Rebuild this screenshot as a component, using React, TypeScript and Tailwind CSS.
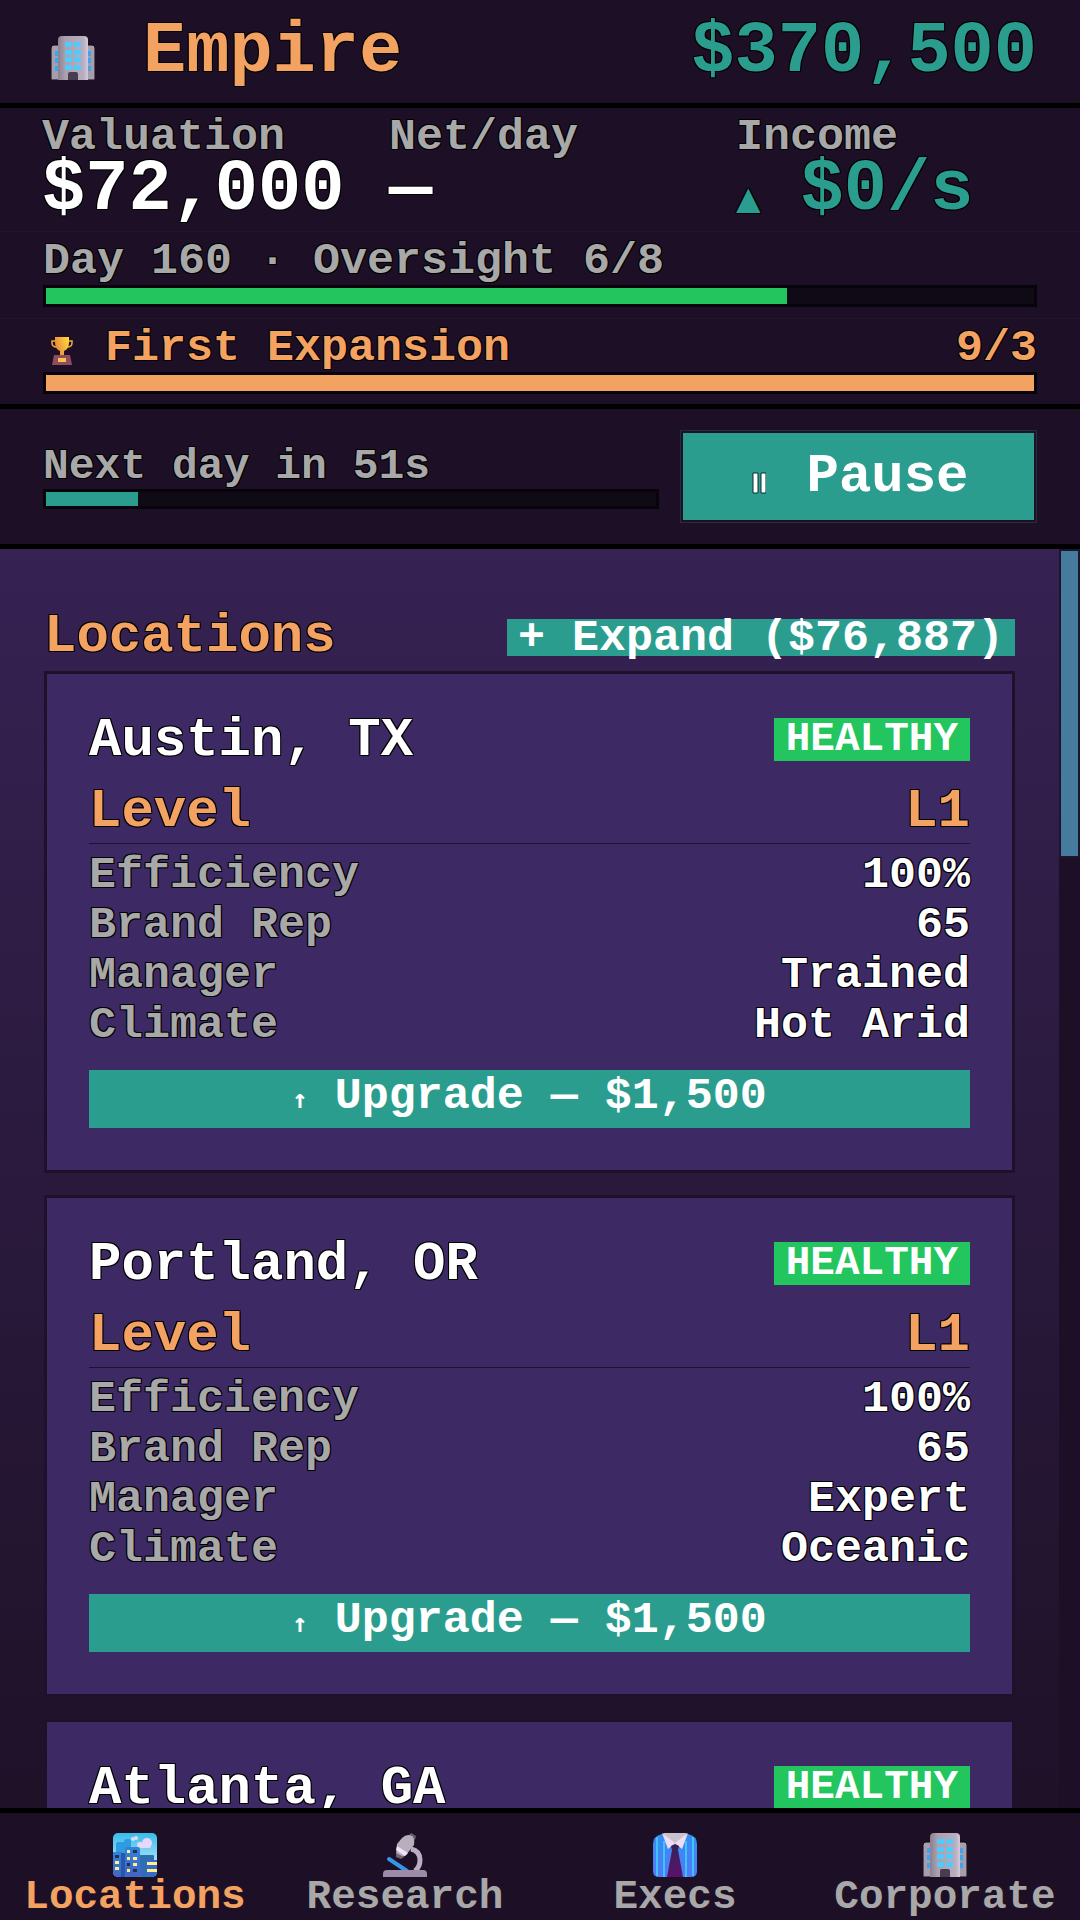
import type { ReactNode } from 'react';

interface IconProps {
    className?: string;
}

function OfficeIcon({ className }: IconProps) {
    return (
        <svg viewBox="0 0 44 44" className={className} aria-hidden="true">
            <defs>
                <linearGradient id="officeWall" x1="0" x2="1" y1="0" y2="0">
                    <stop offset="0" stopColor="#8a808f" />
                    <stop offset="0.25" stopColor="#aaa0ae" />
                    <stop offset="0.85" stopColor="#b9adc0" />
                    <stop offset="1" stopColor="#d4cbd9" />
                </linearGradient>
            </defs>
            <path d="M0 44V12q0-3 3-3h5v35zM44 44V12q0-3-3-3h-5v35z" fill="#a79dab" stroke="#0b0610" />
            <path d="M7 44V4q0-4 4-4h22q4 0 4 4v40z" fill="url(#officeWall)" />
            {[6, 14, 21, 29].map(y => (
                <g key={y} fill="#50cbfb">
                    <rect x="14" y={y} width="7" height="5" rx="1" />
                    <rect x="23" y={y} width="7" height="5" rx="1" />
                </g>
            ))}
            {[15, 22, 30].map(y => (
                <g key={y} fill="#35a8f4">
                    <rect x="4" y={y} width="3" height="5" />
                    <rect x="37" y={y} width="3" height="5" />
                </g>
            ))}
            <path d="M17 44v-6q0-2 2-2h6q2 0 2 2v6z" fill="#463d51" />
        </svg>
    );
}

function TrophyIcon({ className }: IconProps) {
    return (
        <svg viewBox="0 0 22 28" className={className} aria-hidden="true">
            <defs>
                <linearGradient id="cup" x1="0" x2="1" y1="0.6" y2="0.2">
                    <stop offset="0" stopColor="#e8853a" />
                    <stop offset="1" stopColor="#ffd83d" />
                </linearGradient>
            </defs>
            <path d="M5 4H1v2q0 4 5 4M17 4h4v2q0 4-5 4" fill="none" stroke="#f3a93c" strokeWidth="1.5" />
            <path d="M4 0h14v5q0 7-5 9v4H9v-4q-5-2-5-9z" fill="url(#cup)" />
            <path d="M3 18h16l2 10H1z" fill="#8e4c5c" />
            <rect x="7" y="21" width="8" height="4" fill="#fbc14e" />
        </svg>
    );
}

function CityIcon({ className }: IconProps) {
    return (
        <svg viewBox="0 0 44 44" className={className} aria-hidden="true">
            <defs>
                <linearGradient id="sky" x1="0" x2="0" y1="0" y2="1">
                    <stop offset="0" stopColor="#37bdea" />
                    <stop offset="0.6" stopColor="#9fdff8" />
                </linearGradient>
                <linearGradient id="tower" x1="0" x2="0" y1="0" y2="1">
                    <stop offset="0" stopColor="#2f84dc" />
                    <stop offset="1" stopColor="#4663c4" />
                </linearGradient>
                <clipPath id="cityFrame">
                    <rect width="44" height="44" rx="5" />
                </clipPath>
            </defs>
            <g clipPath="url(#cityFrame)">
                <rect width="44" height="44" fill="url(#sky)" />
                <path d="M3 44V11q0-2 2-2h6V8q0-2 2-2h3q2 0 2 2v36z" fill="#2f9be2" />
                <rect x="26" y="22" width="15" height="22" rx="1" fill="#2a6fae" />
                <g fill="#e6d8fa">
                    <circle cx="34" cy="10" r="5" />
                    <circle cx="27" cy="12" r="3" />
                    <circle cx="23" cy="5" r="2" />
                    <circle cx="20" cy="6" r="2" />
                    <rect x="25" y="11" width="13" height="4" rx="2" />
                </g>
                <rect x="0" y="19" width="9" height="25" fill="url(#tower)" />
                <rect x="8" y="20" width="4" height="24" fill="#2656ad" />
                <rect x="12" y="14" width="15" height="30" rx="2" fill="url(#tower)" />
                <path d="M27 34l3-2v12h-3zM33 27h11v17H33z" fill="#3769c8" />
                <g fill="#fff089">
                    <path d="M14 17h3v3h-3zM14 24h3v3h-3zM14 36h3v3h-3zM20 24h4v3h-4zM20 30h4v3h-4z" />
                    <path d="M2 28h4v3H2zM2 34h4v3H2zM34 29h10v3H34zM34 36h10v3H34z" />
                </g>
                <path d="M20 17h4v3h-4zM14 30h3v3h-3zM20 36h4v3h-4zM2 22h4v3H2z" fill="#25304f" />
            </g>
        </svg>
    );
}

function MicroscopeIcon({ className }: IconProps) {
    return (
        <svg viewBox="0 0 44 44" className={className} aria-hidden="true">
            <path d="M28 16q9 2 9 11 0 7-5 11" fill="none" stroke="#b9aec2" strokeWidth="5" />
            <path d="M6 26l18 12" stroke="#3795e8" strokeWidth="4" strokeLinecap="round" />
            <path d="M0 44v-3q0-4 4-4h36q4 0 4 4v3z" fill="#9b8ba8" />
            <path d="M26 2l2-2 5 3-1 4z" fill="#665f6b" />
            <path d="M19 5q5-5 10-2 3 2 2 9l-8 10q-4 4-10 0l1-11z" fill="#b7afbb" />
            <path d="M14 13l11 7-3 3-9-6z" fill="#f0e2fa" />
            <path d="M13 20l8 4-3 2-5-2z" fill="#6d6474" />
        </svg>
    );
}

function ShirtIcon({ className }: IconProps) {
    return (
        <svg viewBox="0 0 44 44" className={className} aria-hidden="true">
            <defs>
                <linearGradient id="shirt" x1="0" x2="0" y1="0" y2="1">
                    <stop offset="0" stopColor="#358ff3" />
                    <stop offset="1" stopColor="#5379f6" />
                </linearGradient>
                <linearGradient id="tie" x1="0" x2="0" y1="0" y2="1">
                    <stop offset="0" stopColor="#342457" />
                    <stop offset="1" stopColor="#5b116c" />
                </linearGradient>
            </defs>
            <path d="M9 1q-9 2-9 10v27q0 6 6 6h32q6 0 6-6V11q0-8-9-10z" fill="url(#shirt)" />
            <path d="M4 4v39M11 8v36M33 8v36M40 4v39" stroke="#3ec3fa" strokeWidth="2" />
            <path d="M10 0h24l-8 12h-8z" fill="#c8c2cc" />
            <path d="M9 0l13 10-7 6zM35 0L22 10l7 6z" fill="#f0ddf5" />
            <path d="M18 13l4-2 4 2-1 4 5 27H14l5-27z" fill="url(#tie)" />
        </svg>
    );
}

const STATS = [
    { label: 'Valuation', value: '$72,000', tone: 'text-white', up: false },
    { label: 'Net/day', value: '—', tone: 'text-white', up: false },
    { label: 'Income', value: '$0/s', tone: 'text-[#2a9d8f]', up: true },
];

const LOCATIONS = [
    { city: 'Austin, TX', manager: 'Trained', climate: 'Hot Arid' },
    { city: 'Portland, OR', manager: 'Expert', climate: 'Oceanic' },
    { city: 'Atlanta, GA', manager: 'Trained', climate: 'Humid' },
];

const TABS = [
    { label: 'Locations', icon: CityIcon, active: true },
    { label: 'Research', icon: MicroscopeIcon, active: false },
    { label: 'Execs', icon: ShirtIcon, active: false },
    { label: 'Corporate', icon: OfficeIcon, active: false },
];

interface BarProps {
    label: string;
    percent: number;
    className: string;
    fill: string;
}

function ProgressBar({ label, percent, className, fill }: BarProps) {
    return (
        <div
            role="progressbar"
            aria-label={label}
            aria-valuenow={percent}
            className={`border-3 border-[#08040c] bg-[#100a16] ${className}`}
        >
            <div className={`h-full ${fill}`} style={{ width: `${percent}%` }} />
        </div>
    );
}

function Row({ label, children }: { label: string; children: ReactNode }) {
    return (
        <div className="flex justify-between">
            <dt className="text-[#a8a8a8]">{label}</dt>
            <dd className="text-white">{children}</dd>
        </div>
    );
}

function LocationCard({ city, manager, climate }: (typeof LOCATIONS)[number]) {
    return (
        <article className="border-3 border-[#1f1129] bg-[#3d2963] p-[42px]">
            <div className="flex items-start justify-between">
                <h3 className="text-[54px] leading-[50px] text-white">{city}</h3>
                <span className="mt-0.5 bg-[#22c55e] px-3 text-[41px] leading-[43px] text-white [text-shadow:none]">HEALTHY</span>
            </div>
            <div className="mt-4 flex justify-between border-b border-[#20122c] pb-px text-[54px] leading-[60px] text-[#f4a261]">
                <span>Level</span>
                <span>L1</span>
            </div>
            <dl className="mt-[7px] text-[45px] leading-[50px]">
                <Row label="Efficiency">100%</Row>
                <Row label="Brand Rep">65</Row>
                <Row label="Manager">{manager}</Row>
                <Row label="Climate">{climate}</Row>
            </dl>
            <button className="mt-[19px] flex h-[58px] w-full items-center justify-center bg-[#2a9d8f] pb-1 text-[45px] leading-[50px] whitespace-pre text-white">
                <span className="pt-1 font-['DejaVu_Sans_Mono',monospace] text-[26px]">↑</span> Upgrade — $1,500
            </button>
        </article>
    );
}

export default function App() {
    return (
        <div className="flex h-screen flex-col bg-[#1d1026] font-['Liberation_Mono',monospace] font-bold whitespace-nowrap [text-shadow:1px_1px_0_#000,-1px_-1px_0_#000,1px_-1px_0_#000,-1px_1px_0_#000]">
            {/* Title and cash */}
            <header className="flex h-[108px] shrink-0 items-center justify-between border-b-5 border-black px-[43px] text-[72px] leading-[80px]">
                <h1 className="flex items-center text-[#f4a261]">
                    <OfficeIcon className="mt-3 mr-12 ml-2 size-11" />
                    Empire
                </h1>
                <span className="text-[#2a9d8f]">$370,500</span>
            </header>

            {/* Stats */}
            <section className="shrink-0 border-b-5 border-black text-[45px] leading-[44px]">
                <dl className="grid grid-cols-3 gap-[45px] px-[42px] pt-2 pb-[11px]">
                    {STATS.map(s => (
                        <div key={s.label} className="min-w-0">
                            <dt className="text-[#a8a8a8]">{s.label}</dt>
                            <dd className={`flex items-center text-[72px] leading-[60px] ${s.tone}`}>
                                {s.up && <span className="mr-10 pt-4 font-['DejaVu_Sans',sans-serif] text-[32px] leading-8">▲</span>}
                                {s.value}
                            </dd>
                        </div>
                    ))}
                </dl>
                <div className="border-t border-[#22152c] px-[43px] pt-2 pb-[11px]">
                    <p className="text-[#a8a8a8]">Day 160 · Oversight 6/8</p>
                    <ProgressBar label="Oversight" percent={75} className="mt-px h-[22px]" fill="bg-[#22c55e]" />
                </div>
                <div className="border-t border-[#22152c] px-[43px] pt-2 pb-[10px]">
                    <div className="flex justify-between text-[#f4a261]">
                        <span className="flex items-center">
                            <TrophyIcon className="mt-1 mr-8 ml-2 h-7" />
                            First Expansion
                        </span>
                        <span>9/3</span>
                    </div>
                    <ProgressBar label="First Expansion" percent={100} className="mt-px h-[22px]" fill="bg-[#f4a261]" />
                </div>
            </section>

            {/* Day timer */}
            <section className="flex shrink-0 items-center gap-[21px] border-b-5 border-black px-[43px] py-[21px]">
                <div className="flex-1">
                    <p className="text-[43px] leading-[44px] text-[#a8a8a8]">Next day in 51s</p>
                    <ProgressBar label="Next day" percent={15} className="h-5" fill="bg-[#2a9d8f]" />
                </div>
                <button className="m-px flex h-[91px] w-[355px] items-center justify-center border-2 border-[#1d1026] bg-[#2a9d8f] bg-clip-padding pl-1 text-[54px] leading-[60px] text-white ring-1 ring-[#23303c]">
                    <svg viewBox="0 0 14 22" className="mt-3 mr-10 h-[22px]" aria-hidden="true">
                        <path d="M1 1h5v20H1zM9 1h5v20H9z" fill="#fff" stroke="#0b2b2a" />
                    </svg>
                    Pause
                </button>
            </section>

            {/* Location list */}
            <div className="flex min-h-0 flex-1 bg-linear-to-b from-[#362253] to-[#1f1128]">
                <main className="min-w-0 flex-1 overflow-y-auto px-11 pt-[58px] [scrollbar-width:none]">
                    <div className="mb-1 flex items-center justify-between">
                        <h2 className="text-[54px] leading-[60px] text-[#f4a261]">Locations</h2>
                        <button className="bg-[#2a9d8f] px-[11px] pt-0.5 text-[45px] leading-[35px] text-white">+ Expand ($76,887)</button>
                    </div>
                    <div className="flex flex-col gap-[22px]">
                        {LOCATIONS.map(l => (
                            <LocationCard key={l.city} {...l} />
                        ))}
                    </div>
                </main>
                <div className="w-[21px] bg-[#1d1026]">
                    <div className="h-[309px] border-2 border-[#1d1430] bg-[#457b9d]" />
                </div>
            </div>

            {/* Tabs */}
            <nav className="grid shrink-0 grid-cols-4 border-t-5 border-black pt-5 pb-0.5">
                {TABS.map(t => {
                    const Icon = t.icon;
                    return (
                        <button
                            key={t.label}
                            className={`flex flex-col items-center text-[41px] leading-[41px] ${t.active ? 'text-[#f4a261]' : 'text-[#a8a8a8]'}`}
                        >
                            <Icon className="size-11" />
                            {t.label}
                        </button>
                    );
                })}
            </nav>
        </div>
    );
}
